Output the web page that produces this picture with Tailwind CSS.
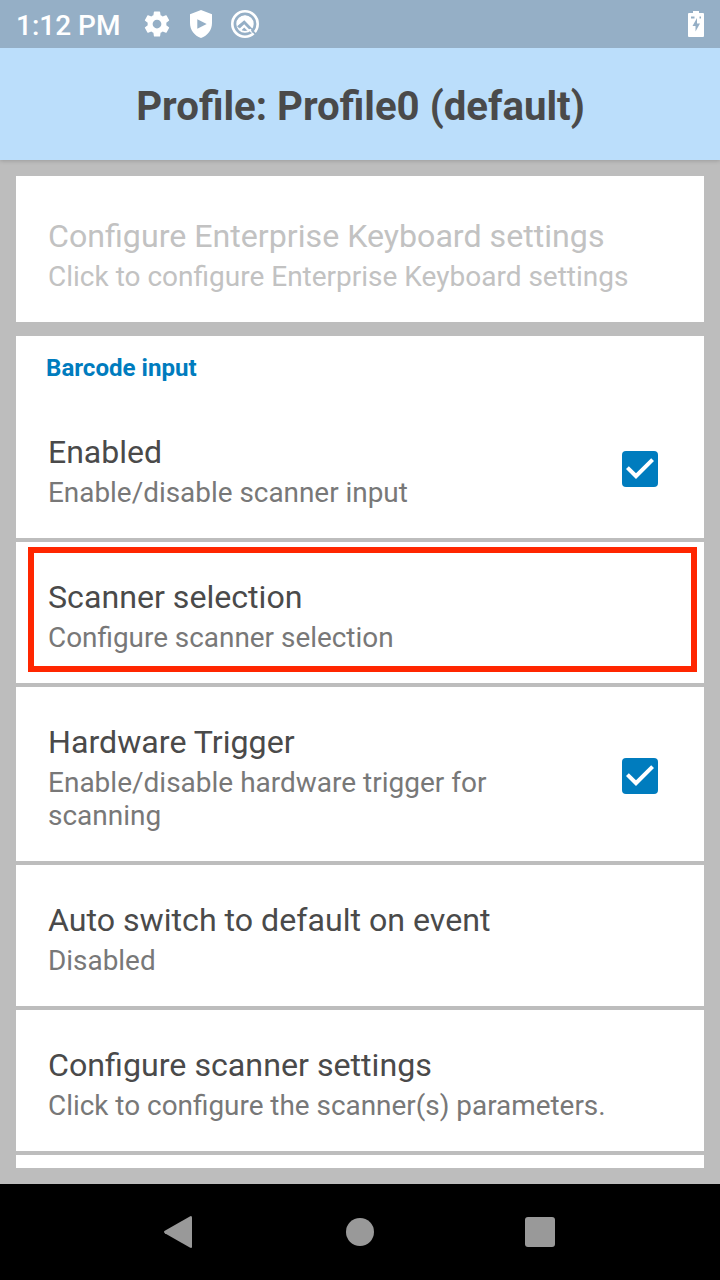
<!DOCTYPE html>
<html lang="en">
<head>
<meta charset="utf-8">
<title>Profile0</title>
<script src="https://cdn.jsdelivr.net/npm/@tailwindcss/browser@4"></script>
</head>
<body class="w-[720px] h-[1280px] overflow-hidden flex flex-col bg-[#bdbdbd] font-['Roboto',sans-serif] text-[#4a4a4a]">
  <header class="relative shrink-0 shadow-[0_1px_4px_rgba(0,0,0,0.18)]">
    <div class="h-12 bg-[#95afc6] flex items-center text-white pl-4 pr-2">
      <span class="w-[126px] shrink-0 text-[28px] leading-[48px] font-medium pt-[3px] whitespace-nowrap">1:12 PM</span>
      <svg class="w-[30px] h-[30px]" viewBox="0 0 24 24" fill="currentColor"><path d="M19.43 12.98c.04-.32.07-.64.07-.98s-.03-.66-.07-.98l2.11-1.65c.19-.15.24-.42.12-.64l-2-3.46c-.12-.22-.39-.3-.61-.22l-2.49 1c-.52-.4-1.08-.73-1.69-.98l-.38-2.65C14.46 2.18 14.25 2 14 2h-4c-.25 0-.46.18-.49.42l-.38 2.65c-.61.25-1.17.59-1.69.98l-2.49-1c-.23-.09-.49 0-.61.22l-2 3.46c-.13.22-.07.49.12.64l2.11 1.65c-.04.32-.07.65-.07.98s.03.66.07.98l-2.11 1.65c-.19.15-.24.42-.12.64l2 3.46c.12.22.39.3.61.22l2.49-1c.52.4 1.08.73 1.69.98l.38 2.65c.03.24.24.42.49.42h4c.25 0 .46-.18.49-.42l.38-2.65c.61-.25 1.17-.59 1.69-.98l2.49 1c.23.09.49 0 .61-.22l2-3.46c.12-.22.07-.49-.12-.64l-2.11-1.65zM12 15.5c-1.93 0-3.5-1.57-3.5-3.5s1.57-3.5 3.5-3.5 3.5 1.57 3.5 3.5-1.57 3.500-3.500 3.500z"/></svg>
      <svg class="w-[22px] h-7 ml-[18px]" viewBox="0 0 22 28" fill="currentColor" fill-rule="evenodd"><path d="M11 0 22 4.2V13c0 7-4.400 12.600-11 15C4.400 25.600 0 20 0 13V4.200zM7.300 9.200v9.600l9.400-4.800z"/></svg>
      <svg class="w-7 h-7 ml-[19px]" viewBox="0 0 28 28" fill="none" stroke="currentColor"><circle cx="14" cy="14" r="12.700" stroke-width="2.600"/><circle cx="14" cy="14" r="7.800" stroke-width="1.800"/><path d="M6 13.500A8 8 0 0 1 22 14Q22 17 20.500 18.500L13.300 10.800 6.500 16.500z" fill="currentColor" stroke="none"/><path d="M8.500 18.800 13.200 14.300 19 20.300 17 21.300 13.200 17.600 10 20.800z" fill="currentColor" stroke="none"/><path d="M6.800 17 13.200 11.700 21 19.700" stroke="#95afc6" stroke-width="2"/><path d="M18.500 19.500 21.200 22.200" stroke-width="2.400"/><path d="M20.500 20 26 25.500" stroke="#95afc6" stroke-width="1.800"/></svg>
      <svg class="w-4 h-[26px] ml-auto mr-2" viewBox="0 0 16 26" fill="currentColor"><path d="M5 0h6v2h4q1 0 1 1v22q0 1-1 1H1q-1 0-1-1V3q0-1 1-1h4z"/><path d="M3 5.500h3.500v2H3zM11.500 5.500H13v2h-1.500zM9 7v5.500h3L7.500 20.500V15H4.500z" fill="#95afc6"/></svg>
    </div>
    <h1 class="h-28 bg-[#bbdefb] text-center text-[40.2px] leading-[118px] font-bold whitespace-nowrap pl-px">Profile: Profile0 (default)</h1>
  </header>
  <main class="h-[1024px] shrink-0 px-4 pt-4 pb-4 flex flex-col">
    <section class="h-[146px] shrink-0 bg-white px-8 pt-[39px] text-[#c2c2c2]">
      <h2 class="text-[32.17px] leading-[43px] whitespace-nowrap"><span>Configure Enterprise Keyboard settings</span></h2>
      <p class="text-[28px] leading-[33px] mt-[2px] whitespace-nowrap"><span>Click to configure Enterprise Keyboard settings</span></p>
    </section>
    <section class="mt-[14px] h-[832px] shrink-0 overflow-hidden flex flex-col gap-1">
      <div class="h-[202px] shrink-0 bg-white">
        <h3 class="h-[61px] pl-[30px] text-[24.1px] leading-[64px] font-bold text-[#007cbe]"><span>Barcode input</span></h3>
        <div class="h-[141px] flex justify-between px-8 pr-10">
          <div class="pt-[34px]">
            <h2 class="text-[32px] leading-[43px]"><span>Enabled</span></h2>
            <p class="text-[27.9px] leading-[33px] mt-[2px] text-[#787878]"><span>Enable/disable scanner input</span></p>
          </div>
          <svg class="w-12 h-12 mt-12" viewBox="0 0 24 24"><rect x="3" y="3" width="18" height="18" rx="2" fill="#007cbe"/><path d="M10 17l-5-5 1.410-1.410L10 14.170l7.590-7.590L19 8z" fill="#fff"/></svg>
        </div>
      </div>
      <div class="relative h-[141px] shrink-0 bg-white px-8 pt-[34px]">
        <h2 class="text-[32.15px] leading-[43px]"><span>Scanner selection</span></h2>
        <p class="text-[27.9px] leading-[33px] mt-[2px] text-[#787878]"><span>Configure scanner selection</span></p>
        <div class="absolute left-3 top-[5px] w-[669px] h-[125px] border-6 border-[#ff2600]"></div>
      </div>
      <div class="h-[174px] shrink-0 bg-white flex justify-between pl-8 pr-10">
        <div class="pt-[34px]">
          <h2 class="text-[32.17px] leading-[43px]"><span>Hardware Trigger</span></h2>
          <p class="text-[28px] leading-[33px] mt-[2px] text-[#787878]"><span>Enable/disable hardware trigger for<br>scanning</span></p>
        </div>
        <svg class="w-12 h-12 mt-[65px]" viewBox="0 0 24 24"><rect x="3" y="3" width="18" height="18" rx="2" fill="#007cbe"/><path d="M10 17l-5-5 1.410-1.410L10 14.170l7.590-7.590L19 8z" fill="#fff"/></svg>
      </div>
      <div class="h-[141px] shrink-0 bg-white px-8 pt-[34px]">
        <h2 class="text-[32.15px] leading-[43px]"><span>Auto switch to default on event</span></h2>
        <p class="text-[27.9px] leading-[33px] mt-[2px] text-[#787878]"><span>Disabled</span></p>
      </div>
      <div class="h-[141px] shrink-0 bg-white px-8 pt-[34px]">
        <h2 class="text-[32.2px] leading-[43px]"><span>Configure scanner settings</span></h2>
        <p class="text-[27.9px] leading-[33px] mt-[2px] text-[#787878]"><span>Click to configure the scanner(s) parameters.</span></p>
      </div>
      <div class="h-[13px] shrink-0 bg-white"></div>
    </section>
  </main>
  <nav class="h-24 shrink-0 bg-black flex items-center pl-[164px] text-[#999999]">
    <svg class="w-7 h-8" viewBox="0 0 28 32" fill="currentColor"><path d="M25.800.4Q28-.8 28 1.600V30.400Q28 32.800 25.800 31.600L.8 17.200Q-.8 16 .8 14.800z"/></svg>
    <div class="w-7 h-7 ml-[154px] rounded-full bg-[#999999]"></div>
    <div class="w-[30px] h-[30px] ml-[151px] rounded-[3px] bg-[#999999]"></div>
  </nav>
</body>
</html>
